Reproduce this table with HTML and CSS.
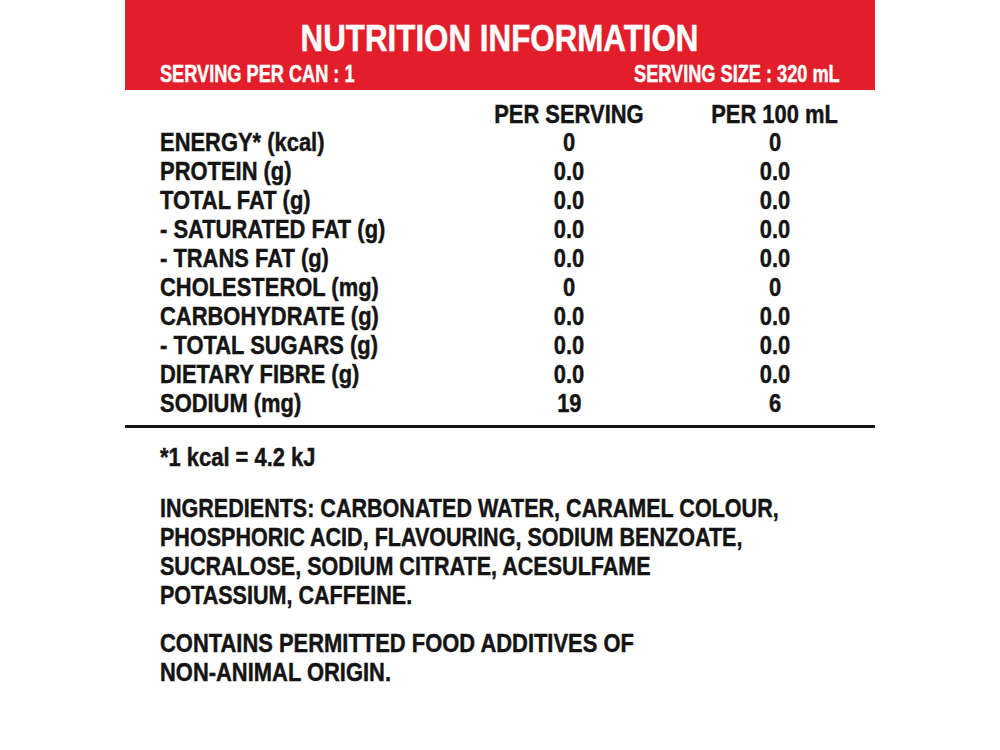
FILE: index.html
```html
<!DOCTYPE html>
<html lang="en">
<head>
<meta charset="utf-8">
<title>Nutrition Information</title>
<link rel="stylesheet" href="styles.css">
</head>
<body>
<main class="label">
  <header class="band">
    <h1 class="title"><span class="t">NUTRITION INFORMATION</span></h1>
    <div class="serving">
      <span class="t">SERVING PER CAN : 1</span>
      <span class="t t-right">SERVING SIZE : 320 mL</span>
    </div>
  </header>
  <section class="facts">
    <div class="cell"></div><div class="cell num"><span class="t">PER SERVING</span></div><div class="cell num"><span class="t">PER 100 mL</span></div>
    <div class="cell"><span class="t">ENERGY* (kcal)</span></div><div class="cell num"><span class="t">0</span></div><div class="cell num"><span class="t">0</span></div>
    <div class="cell"><span class="t">PROTEIN (g)</span></div><div class="cell num"><span class="t">0.0</span></div><div class="cell num"><span class="t">0.0</span></div>
    <div class="cell"><span class="t">TOTAL FAT (g)</span></div><div class="cell num"><span class="t">0.0</span></div><div class="cell num"><span class="t">0.0</span></div>
    <div class="cell"><span class="t">- SATURATED FAT (g)</span></div><div class="cell num"><span class="t">0.0</span></div><div class="cell num"><span class="t">0.0</span></div>
    <div class="cell"><span class="t">- TRANS FAT (g)</span></div><div class="cell num"><span class="t">0.0</span></div><div class="cell num"><span class="t">0.0</span></div>
    <div class="cell"><span class="t">CHOLESTEROL (mg)</span></div><div class="cell num"><span class="t">0</span></div><div class="cell num"><span class="t">0</span></div>
    <div class="cell"><span class="t">CARBOHYDRATE (g)</span></div><div class="cell num"><span class="t">0.0</span></div><div class="cell num"><span class="t">0.0</span></div>
    <div class="cell"><span class="t">- TOTAL SUGARS (g)</span></div><div class="cell num"><span class="t">0.0</span></div><div class="cell num"><span class="t">0.0</span></div>
    <div class="cell"><span class="t">DIETARY FIBRE (g)</span></div><div class="cell num"><span class="t">0.0</span></div><div class="cell num"><span class="t">0.0</span></div>
    <div class="cell"><span class="t">SODIUM (mg)</span></div><div class="cell num"><span class="t">19</span></div><div class="cell num"><span class="t">6</span></div>
  </section>
  <section class="notes">
    <p class="note"><span class="t">*1 kcal = 4.2 kJ</span></p>
    <p class="note ingredients"><span class="t">INGREDIENTS: CARBONATED WATER, CARAMEL COLOUR,<br>PHOSPHORIC ACID, FLAVOURING, SODIUM BENZOATE,<br>SUCRALOSE, SODIUM CITRATE, ACESULFAME<br>POTASSIUM, CAFFEINE.</span></p>
    <p class="note"><span class="t">CONTAINS PERMITTED FOOD ADDITIVES OF<br>NON-ANIMAL ORIGIN.</span></p>
  </section>
</main>
</body>
</html>
```
FILE: styles.css
```css
* { box-sizing: border-box; }
html, body { margin: 0; padding: 0; background: #fff; }
body {
  font-family: "Liberation Sans", Arial, sans-serif;
  font-weight: 700;
  color: #141414;
}
.label {
  width: 750px;
  margin: 0 auto;
  overflow: hidden;
}

/* condensed look: horizontally squeezed text */
.t {
  display: inline-block;
  white-space: nowrap;
  transform: scaleX(0.85);
  transform-origin: left center;
  -webkit-text-stroke: 0.45px currentColor;
}
.num .t,
.title .t { transform-origin: center center; }

.band {
  background: #e21e2b;
  color: #fff;
  height: 90px;
  padding: 19px 35px 0;
}
.title {
  margin: 0;
  display: flex;
  justify-content: center;
  font-size: 36.3px;
  line-height: 40px;
  font-weight: 700;
}
.title .t { transform: scaleX(0.863); }
.serving {
  margin-top: 2.5px;
  display: flex;
  justify-content: space-between;
  font-size: 23.3px;
  line-height: 24px;
}
.serving .t { transform: scaleX(0.78); }
.serving .t-right { transform-origin: right center; }

.facts {
  display: grid;
  grid-template-columns: 336px 146px 68px 130px;
  padding: 9.5px 35px 7.6px;
  border-bottom: 3px solid #141414;
  font-size: 25.8px;
  line-height: 28.9px;
}
.facts > .cell:nth-child(3n) { grid-column: 4; }
.num {
  display: flex;
  justify-content: center;
}

.notes {
  padding: 15.3px 35px 0;
  font-size: 25.8px;
  line-height: 28.9px;
}
.note { margin: 0 0 22px; }
.ingredients { margin-bottom: 19.5px; }
.ingredients .t { transform: scaleX(0.835); }
```
